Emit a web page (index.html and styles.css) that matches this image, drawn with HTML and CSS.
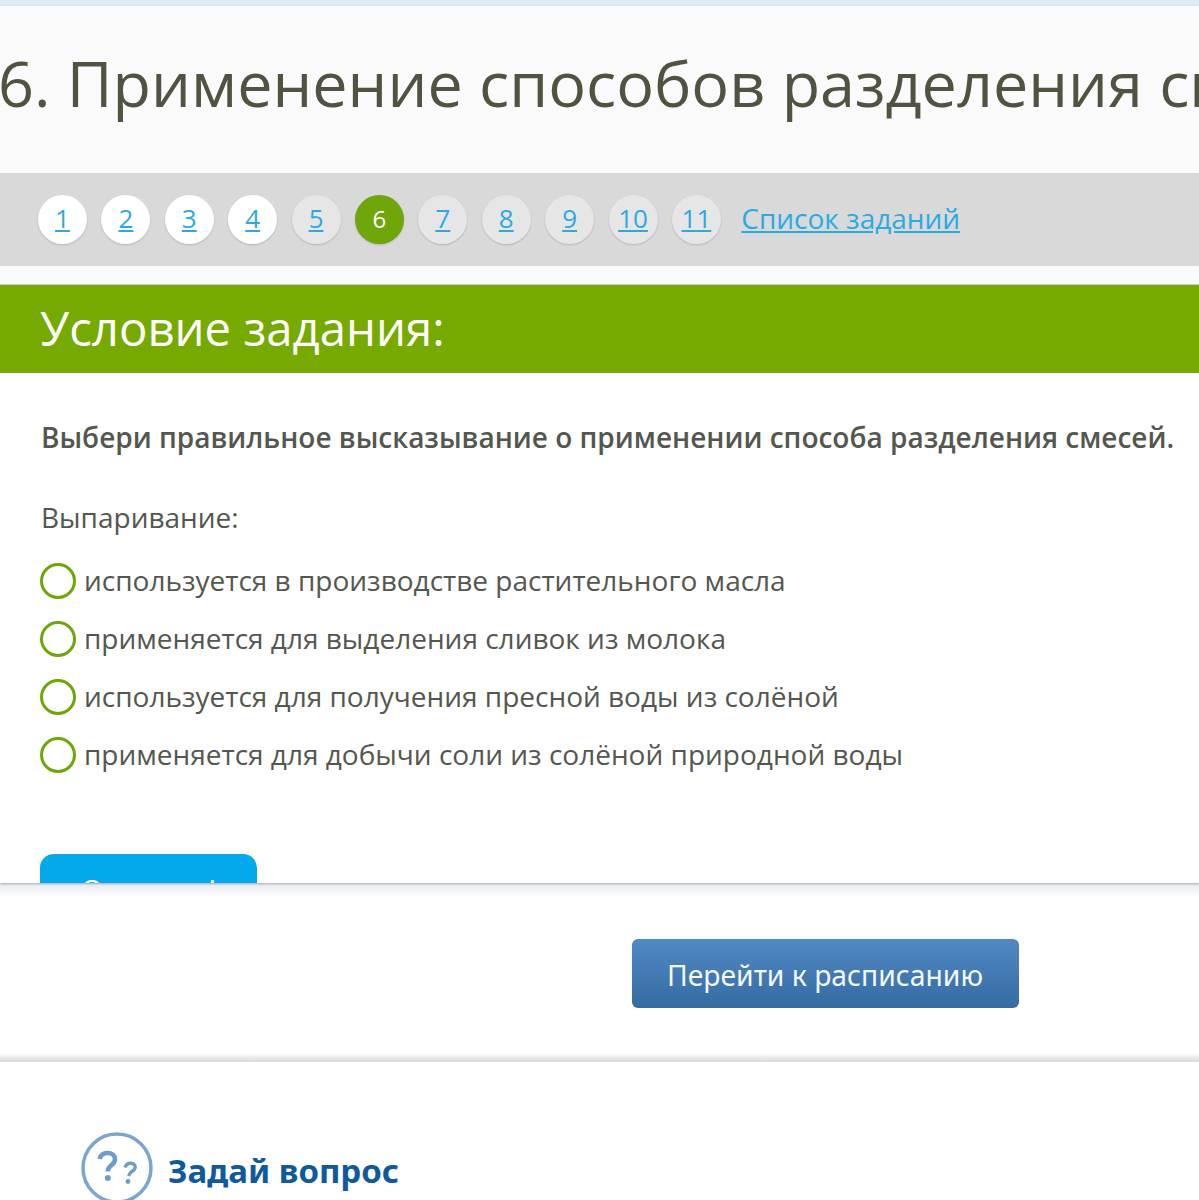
FILE: index.html
```html
<!DOCTYPE html>
<html lang="ru">
<head>
<meta charset="utf-8">
<title>Условие задания</title>
<link rel="stylesheet" href="styles.css">
</head>
<body>
<div class="top-strip"></div>
<main class="task">
  <header class="title-block">
    <h1 class="title">6. Применение способов разделения смесей</h1>
  </header>
  <nav class="pager">
    <a class="dot done" href="#">1</a>
    <a class="dot done" href="#">2</a>
    <a class="dot done" href="#">3</a>
    <a class="dot done" href="#">4</a>
    <a class="dot" href="#">5</a>
    <span class="dot current">6</span>
    <a class="dot" href="#">7</a>
    <a class="dot" href="#">8</a>
    <a class="dot" href="#">9</a>
    <a class="dot" href="#">10</a>
    <a class="dot" href="#">11</a>
    <a class="list-link" href="#">Список заданий</a>
  </nav>
  <div class="spacer"></div>
  <h2 class="cond-head">Условие задания:</h2>
  <section class="cond-body">
    <p class="question">Выбери правильное высказывание о применении способа разделения смесей.</p>
    <p class="lead">Выпаривание:</p>
    <ul class="options">
      <li class="option"><span class="radio"></span>используется в производстве растительного масла</li>
      <li class="option"><span class="radio"></span>применяется для выделения сливок из молока</li>
      <li class="option"><span class="radio"></span>используется для получения пресной воды из солёной</li>
      <li class="option"><span class="radio"></span>применяется для добычи соли из солёной природной воды</li>
    </ul>
    <button class="answer" type="button">Ответить!</button>
  </section>
</main>
<div class="schedule">
  <a class="schedule-btn" href="#">Перейти к расписанию</a>
</div>
<footer class="ask">
  <svg class="ask-icon" width="72" height="72" viewBox="0 0 72 72" aria-hidden="true">
    <circle cx="36" cy="36" r="34" fill="#fff" stroke="#7ba6cf" stroke-width="3.5"/>
    <path d="M18.500 27c1-4 4-6 8-6 4.500 0 7.500 2.500 7.500 6.300 0 3-1.600 4.500-3.800 6-2.300 1.600-3.400 2.800-3.400 6.200" fill="none" stroke="#6f9dc8" stroke-width="4.600"/>
    <circle cx="26.800" cy="46" r="3" fill="#6f9dc8"/>
    <path d="M44 35.500c1-2.800 3-4.200 5.500-4.200 2.800 0 4.700 1.500 4.700 3.800 0 2-1.200 3.100-3 4.200-1.900 1.200-3 2.500-3.500 4.700" fill="none" stroke="#6f9dc8" stroke-width="3.400"/>
    <circle cx="47" cy="49.500" r="2.400" fill="#6f9dc8"/>
  </svg>
  <span class="ask-text">Задай вопрос</span>
</footer>
</body>
</html>
```

FILE: styles.css
```css
html, body {
  margin: 0;
  padding: 0;
  height: 1200px;
  overflow: hidden;
  background: #fff;
  font-family: "Open Sans", "Noto Sans", sans-serif;
  color: #50533f;
}
.top-strip {
  height: 6px;
  background: #dcebf5;
}
.task {
  height: 877px;
  overflow: hidden;
  box-shadow: 0 1px 2px rgba(90, 95, 120, .45);
  position: relative;
}
.title-block {
  height: 167px;
  background: #fafafa;
  overflow: hidden;
}
.title {
  margin: 0 0 0 -2px;
  padding-top: 35px;
  font-size: 62.900px;
  line-height: 84px;
  font-weight: 400;
  white-space: nowrap;
  color: #50533f;
}
.pager {
  height: 93px;
  box-sizing: border-box;
  background: #d9d9d9;
  display: flex;
  align-items: center;
  gap: 14.400px;
  padding: 0 0 0 38px;
}
.dot {
  width: 49px;
  height: 49px;
  box-sizing: border-box;
  padding-bottom: 3px;
  border-radius: 50%;
  background: #e6e6e6;
  box-shadow: 0 1px 2px rgba(0, 0, 0, .16);
  display: flex;
  align-items: center;
  justify-content: center;
  font-size: 26px;
  color: #29abe2;
  flex: none;
}
.dot.done { background: #fff; }
.dot.current {
  background: #6fa60a;
  color: #fff;
  font-size: 24px;
}
.list-link {
  font-size: 28px;
  color: #29abe2;
  margin-left: 6px;
  padding-bottom: 3px;
}
.spacer {
  height: 18px;
  background: #fafafa;
  border-bottom: 1px solid #c9cfc0;
}
.cond-head {
  margin: 0;
  height: 88px;
  background: #76aa00;
  color: #fff;
  font-size: 47.300px;
  line-height: 86px;
  font-weight: 400;
  padding-left: 40px;
}
.cond-body {
  padding: 46px 0 0 40px;
  font-size: 28px;
  color: #54574f;
}
.question {
  margin: 0 0 0 1px;
  font-weight: 600;
  line-height: 36px;
  white-space: nowrap;
}
.lead {
  margin: 44px 0 0 1px;
  line-height: 36px;
}
.options {
  list-style: none;
  margin: 16px 0 0;
  padding: 0;
}
.option {
  height: 58px;
  display: flex;
  align-items: center;
  white-space: nowrap;
}
.radio {
  width: 36px;
  height: 36px;
  box-sizing: border-box;
  border: 3.500px solid #6fa60a;
  border-radius: 50%;
  margin: 2px 8px 0 0;
  flex: none;
}
.answer {
  display: block;
  margin-top: 71px;
  width: 217px;
  height: 70px;
  padding: 0;
  border: 0;
  border-radius: 14px;
  background: #04a9ec;
  color: #fff;
  font: 28px "Open Sans", sans-serif;
}
.schedule {
  height: 179px;
  display: flex;
  align-items: flex-start;
  padding: 56px 0 0 631.500px;
  box-sizing: border-box;
  background: linear-gradient(#e6e9ee, #fff 14px, #fff 170px, #dcdce0 178px);
}
.schedule-btn {
  width: 387px;
  height: 69px;
  border-radius: 6px;
  background: linear-gradient(#5189c5, #356ba1);
  color: #f2f8fc;
  font-size: 28.300px;
  line-height: 72px;
  text-align: center;
  text-decoration: none;
  font-family: "Noto Sans", "Open Sans", sans-serif;
}
.ask {
  display: flex;
  align-items: center;
  padding: 70px 0 0 81px;
  gap: 15px;
}
.ask-icon { flex: none; }
.ask-text {
  font-family: "Noto Sans", "Open Sans", sans-serif;
  font-weight: 700;
  font-size: 33px;
  color: #0e5a9c;
  padding-top: 4px;
}
```
